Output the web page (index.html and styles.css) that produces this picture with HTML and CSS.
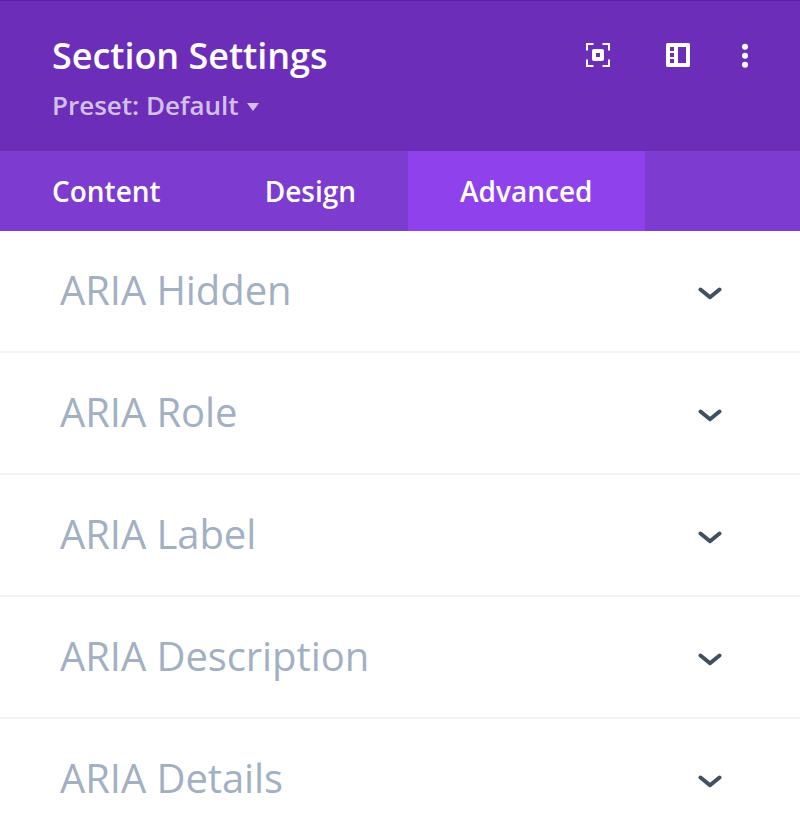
FILE: index.html
```html
<!DOCTYPE html>
<html lang="en">
<head>
<meta charset="utf-8">
<title>Section Settings</title>
<link rel="stylesheet" href="styles.css">
</head>
<body>
<header class="header">
  <div class="heading">
    <h1 class="title">Section Settings</h1>
    <div class="preset">Preset: Default <span class="caret"></span></div>
  </div>
  <div class="actions">
    <svg class="icon-focus" width="24" height="24" viewBox="0 0 24 24"><path d="M1 7.500V1H7.500M16.500 1H23V7.500M23 16.500V23H16.500M7.500 23H1V16.500" fill="none" stroke="#fff" stroke-width="2"/><path fill="#fff" fill-rule="evenodd" d="M8 6H16Q18 6 18 8V16Q18 18 16 18H8Q6 18 6 16V8Q6 6 8 6ZM10 10V14H14V10Z"/></svg>
    <svg class="icon-panel" width="24" height="24" viewBox="0 0 24 24"><path fill="#fff" fill-rule="evenodd" d="M1.500 0H22.500Q24 0 24 1.500V22.500Q24 24 22.500 24H1.500Q0 24 0 22.500V1.500Q0 0 1.500 0ZM4 4V8H8V4ZM4 10V14H8V10ZM4 16V20H8V16ZM12 4V20H20V4Z"/></svg>
    <svg class="icon-more" width="6" height="26" viewBox="0 0 6 26"><g fill="#fff"><circle cx="3" cy="3.800" r="3"/><circle cx="3" cy="12.800" r="3"/><circle cx="3" cy="21.800" r="3"/></g></svg>
  </div>
</header>
<nav class="tabs">
  <a class="tab">Content</a>
  <a class="tab">Design</a>
  <a class="tab active">Advanced</a>
</nav>
<main>
  <section class="row"><h2>ARIA Hidden</h2><svg class="chevron" viewBox="0 0 24 14"><path d="M2.500 2.500L12 10.300L21.500 2.500"/></svg></section>
  <section class="row"><h2>ARIA Role</h2><svg class="chevron" viewBox="0 0 24 14"><path d="M2.500 2.500L12 10.300L21.500 2.500"/></svg></section>
  <section class="row"><h2>ARIA Label</h2><svg class="chevron" viewBox="0 0 24 14"><path d="M2.500 2.500L12 10.300L21.500 2.500"/></svg></section>
  <section class="row"><h2>ARIA Description</h2><svg class="chevron" viewBox="0 0 24 14"><path d="M2.500 2.500L12 10.300L21.500 2.500"/></svg></section>
  <section class="row"><h2>ARIA Details</h2><svg class="chevron" viewBox="0 0 24 14"><path d="M2.500 2.500L12 10.300L21.500 2.500"/></svg></section>
</main>
</body>
</html>
```
FILE: styles.css
```css
* { box-sizing: border-box; }
body {
  margin: 0;
  height: 839px;
  overflow: hidden;
  background: #fff;
  font-family: "Open Sans", sans-serif;
  -webkit-font-smoothing: antialiased;
}
.header {
  height: 151px;
  padding: 30px 52px 0;
  display: flex;
  justify-content: space-between;
  background: #6c2eb9;
  border-top: 1px solid #5b22a4;
}
.title {
  margin: 0;
  font-size: 36px;
  line-height: 49px;
  font-weight: 600;
  letter-spacing: -0.05px;
  color: #fff;
}
.preset {
  display: flex;
  align-items: center;
  gap: 8px;
  margin-top: 7px;
  font-size: 26px;
  line-height: 36px;
  font-weight: 600;
  color: #d3c0ea;
}
.caret {
  margin-top: 3px;
  border: 6px solid transparent;
  border-top: 8px solid #d3c0ea;
  border-bottom: 0;
}
.actions {
  display: flex;
  align-items: flex-start;
  padding-top: 12px;
}
.icon-panel { margin-left: 56px; }
.icon-more { margin-left: 52px; }
.tabs {
  display: flex;
  height: 80px;
  background: #7e3bd0;
}
.tab {
  padding: 0 52px;
  font-size: 28px;
  line-height: 80px;
  font-weight: 600;
  color: #fff;
}
.active { background: #8f42ec; }
.row {
  height: 122px;
  padding: 0 78px 0 60px;
  display: flex;
  align-items: center;
  justify-content: space-between;
  border-bottom: 2px solid #f0f4f8;
}
.row h2 {
  margin: -2px 0 0;
  font-size: 40px;
  line-height: 54px;
  font-weight: 400;
  letter-spacing: -0.08px;
  color: #a2b0c4;
}
.chevron {
  width: 24px;
  height: 14px;
  margin-top: 5px;
  fill: none;
  stroke: #3e5062;
  stroke-width: 4;
  stroke-linecap: round;
  stroke-linejoin: round;
}
```
